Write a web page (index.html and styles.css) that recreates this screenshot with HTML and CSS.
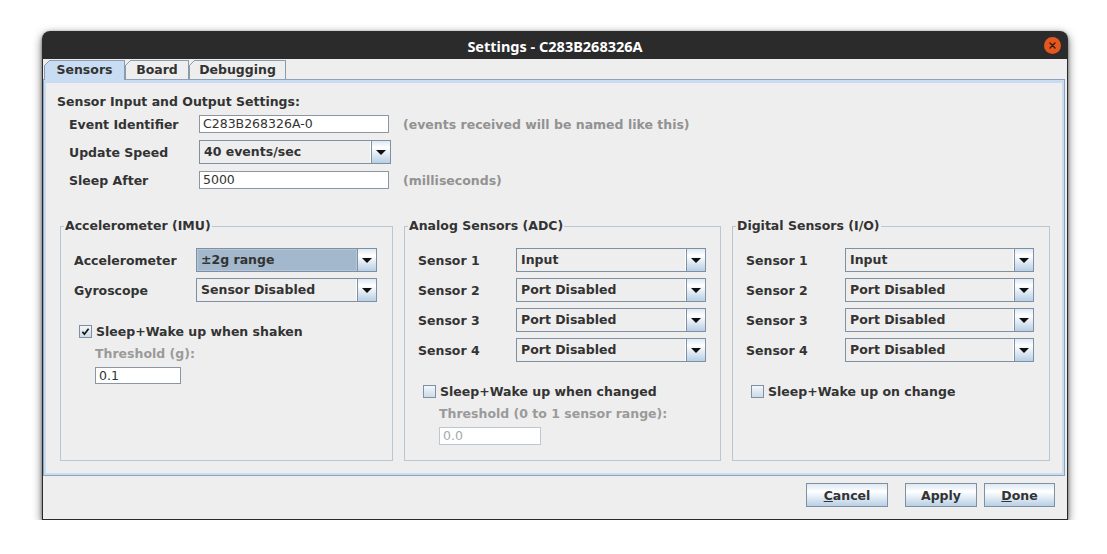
FILE: index.html
```html
<!DOCTYPE html>
<html>
<head>
<meta charset="utf-8">
<title>Settings</title>
<link rel="stylesheet" href="styles.css">
</head>
<body>
<div class="window">
  <div class="titlebar">
    <span></span>
    <span class="title">Settings - C283B268326A</span>
    <span class="close">
      <svg width="17" height="17" viewBox="0 0 17 17"><circle cx="8.5" cy="8.5" r="8.5" fill="#e4571f"/><path d="M6 6 L11 11 M11 6 L6 11" stroke="#3a1a0c" stroke-width="1.4" stroke-linecap="round"/></svg>
    </span>
  </div>
  <div class="frame">
    <div class="tabs">
      <div class="tab tab-sensors selected">Sensors</div>
      <div class="tab tab-board">Board</div>
      <div class="tab tab-debug">Debugging</div>
    </div>
    <div class="tab-content">
      <div class="tab-inner">
        <div class="heading">Sensor Input and Output Settings:</div>
        <div class="general">
          <div class="label">Event Identifier</div>
          <div class="field field-general">C283B268326A-0</div>
          <div class="hint">(events received will be named like this)</div>

          <div class="label">Update Speed</div>
          <div class="combo"><span class="combo-value">40 events/sec</span><span class="combo-arrow"></span></div>
          <div></div>

          <div class="label">Sleep After</div>
          <div class="field field-general">5000</div>
          <div class="hint">(milliseconds)</div>
        </div>

        <div class="panels">
          <fieldset class="panel">
            <legend>Accelerometer (IMU)</legend>
            <div class="panel-body">
              <div class="rows rows-imu">
                <div class="label">Accelerometer</div>
                <div class="combo combo-focused"><span class="combo-value">±2g range</span><span class="combo-arrow"></span></div>
                <div class="label">Gyroscope</div>
                <div class="combo"><span class="combo-value">Sensor Disabled</span><span class="combo-arrow"></span></div>
              </div>
              <div class="check-row check-row-imu">
                <span class="check"><svg width="11" height="11" viewBox="0 0 11 11"><path d="M2.4 5.8 L4.4 8.2 L8.6 2.8" fill="none" stroke="#111" stroke-width="1.7"/></svg></span>
                <span>Sleep+Wake up when shaken</span>
              </div>
              <div class="sub-label">Threshold (g):</div>
              <div class="field field-imu">0.1</div>
            </div>
          </fieldset>

          <fieldset class="panel">
            <legend>Analog Sensors (ADC)</legend>
            <div class="panel-body">
              <div class="rows rows-adc">
                <div class="label">Sensor 1</div>
                <div class="combo"><span class="combo-value">Input</span><span class="combo-arrow"></span></div>
                <div class="label">Sensor 2</div>
                <div class="combo"><span class="combo-value">Port Disabled</span><span class="combo-arrow"></span></div>
                <div class="label">Sensor 3</div>
                <div class="combo"><span class="combo-value">Port Disabled</span><span class="combo-arrow"></span></div>
                <div class="label">Sensor 4</div>
                <div class="combo"><span class="combo-value">Port Disabled</span><span class="combo-arrow"></span></div>
              </div>
              <div class="check-row">
                <span class="check"></span>
                <span>Sleep+Wake up when changed</span>
              </div>
              <div class="sub-label">Threshold (0 to 1 sensor range):</div>
              <div class="field field-adc disabled">0.0</div>
            </div>
          </fieldset>

          <fieldset class="panel">
            <legend>Digital Sensors (I/O)</legend>
            <div class="panel-body">
              <div class="rows rows-io">
                <div class="label">Sensor 1</div>
                <div class="combo"><span class="combo-value">Input</span><span class="combo-arrow"></span></div>
                <div class="label">Sensor 2</div>
                <div class="combo"><span class="combo-value">Port Disabled</span><span class="combo-arrow"></span></div>
                <div class="label">Sensor 3</div>
                <div class="combo"><span class="combo-value">Port Disabled</span><span class="combo-arrow"></span></div>
                <div class="label">Sensor 4</div>
                <div class="combo"><span class="combo-value">Port Disabled</span><span class="combo-arrow"></span></div>
              </div>
              <div class="check-row">
                <span class="check"></span>
                <span>Sleep+Wake up on change</span>
              </div>
            </div>
          </fieldset>
        </div>
      </div>
    </div>
    <div class="footer">
      <button class="btn btn-cancel"><u>C</u>ancel</button>
      <button class="btn btn-apply">Apply</button>
      <button class="btn btn-done"><u>D</u>one</button>
    </div>
  </div>
</div>
</body>
</html>
```
FILE: styles.css
```css
* { box-sizing: border-box; }

html, body {
  margin: 0;
  padding: 0;
  background: #ffffff;
}

body {
  font-family: "DejaVu Sans", "Liberation Sans", sans-serif;
  font-size: 12.5px;
  font-weight: bold;
  color: #333333;
}

.window {
  margin: 31px 0 0 42px;
  width: 1026px;
  height: 489px;
  display: flex;
  flex-direction: column;
  border-radius: 8px 8px 0 0;
  box-shadow: 0 3px 10px rgba(0, 0, 0, 0.6), 0 1px 3px rgba(0, 0, 0, 0.4);
}

.titlebar {
  height: 28px;
  flex: none;
  background: #2b2b2b;
  border-radius: 8px 8px 0 0;
  display: grid;
  grid-template-columns: 40px 1fr 40px;
  align-items: center;
}

.title {
  text-align: center;
  color: #ffffff;
  font-family: "Noto Sans", "DejaVu Sans", sans-serif;
  font-size: 14.5px;
  font-weight: bold;
  padding-top: 1px;
}

.close {
  justify-self: end;
  margin-right: 7px;
  width: 17px;
  height: 17px;
  display: flex;
}

.frame {
  flex: 1;
  display: flex;
  flex-direction: column;
  background: #eeeeee;
  border: 1px solid #2a2a2a;
  border-top: none;
  min-height: 0;
}

.tabs {
  display: flex;
  margin: 1px 0 0 1px;
  height: 19px;
  flex: none;
  position: relative;
  z-index: 1;
}

.tab {
  position: relative;
  height: 19px;
  border: 1px solid #8e9aa6;
  border-bottom: none;
  text-align: center;
  line-height: 17px;
  background: #eeeeee;
}

.tab::before {
  content: "";
  position: absolute;
  left: -1px;
  top: -1px;
  width: 7px;
  height: 7px;
  background: linear-gradient(135deg, #eeeeee 0 3.6px, #8e9aa6 3.6px 4.6px, transparent 4.6px);
}

.tab.selected {
  background: #c8ddf2;
  height: 20px;
  border-color: #8a9cb0;
}

.tab.selected::before {
  background: linear-gradient(135deg, #eeeeee 0 3.6px, #8a9cb0 3.6px 4.6px, transparent 4.6px);
}

.tab-sensors { width: 81px; }
.tab-board { width: 64px; }
.tab-debug { width: 97px; }

.tab-content {
  flex: 1;
  margin-right: 2px;
  border: 1px solid #8ea2b8;
  display: flex;
  min-height: 0;
}

.tab-inner {
  flex: 1;
  border: 2px solid #c8ddf2;
  border-top-width: 3px;
  display: flex;
  flex-direction: column;
  padding: 11px 0 0 11px;
}

.heading {
  line-height: 15px;
}

.general {
  margin: 6px 0 0 12px;
  display: grid;
  grid-template-columns: 130px 192px auto;
  grid-template-rows: 18px 24px 18px;
  row-gap: 7px;
  align-items: center;
}

.label {
  line-height: 15px;
  white-space: nowrap;
}

.hint {
  color: #929292;
  margin-left: 12px;
  line-height: 15px;
}

.field {
  height: 18px;
  border: 1px solid #8c96a0;
  background: #ffffff;
  font-weight: normal;
  padding-left: 3px;
  line-height: 16px;
  color: #333333;
  white-space: nowrap;
}

.field-general { width: 190px; }

.field.disabled {
  border-color: #bcc7d2;
  color: #a8a8a8;
}

.combo {
  height: 24px;
  border: 1px solid #7f90a2;
  display: flex;
  background: #eeeeee;
}

.combo-value {
  flex: 1;
  padding-left: 4px;
  line-height: 22px;
  white-space: nowrap;
  border-right: 1px solid #ffffff;
}

.combo-focused .combo-value {
  background: #a3b8cc;
  border: 1px solid #b4c6d8;
  padding-left: 3px;
  line-height: 20px;
}

.combo-arrow {
  width: 19px;
  flex: none;
  border-left: 1px solid #7f90a2;
  background: linear-gradient(#dde8f3 0%, #ffffff 30%, #b8cfe5 100%);
  display: flex;
  align-items: center;
  justify-content: center;
}

.combo-arrow::after {
  content: "";
  width: 0;
  height: 0;
  border-left: 5px solid transparent;
  border-right: 5px solid transparent;
  border-top: 5px solid #111111;
}

.panels {
  flex: 1;
  margin: 29px 0 12px 3px;
  display: grid;
  grid-template-columns: 333px 317px 318px;
  column-gap: 11px;
}

.panel {
  margin: 0;
  padding: 0;
  min-width: 0;
  border: 1px solid #b9c6d3;
}

.panel legend {
  margin-left: 3px;
  padding: 0 1px;
  line-height: 16px;
}

.panel-body {
  padding: 14px 14px 0 13px;
}

.rows {
  display: grid;
  grid-auto-rows: 24px;
  row-gap: 6px;
  align-items: center;
}

.rows-imu { grid-template-columns: 122px 181px; }
.rows-adc { grid-template-columns: 98px 190px; }
.rows-io { grid-template-columns: 99px 189px; }

.check-row {
  margin: 22px 0 0 5px;
  display: flex;
  align-items: center;
  gap: 4px;
  line-height: 15px;
}

.check-row-imu { margin-top: 22px; }

.check {
  width: 13px;
  height: 13px;
  flex: none;
  border: 1px solid #7f90a2;
  background: linear-gradient(#f3f7fb, #ccdae8);
  display: flex;
  align-items: center;
  justify-content: center;
}

.sub-label {
  margin: 7px 0 0 21px;
  color: #9a9a9a;
  line-height: 15px;
}

.sub-label + .field {
  margin: 6px 0 0 21px;
}

.field-imu { width: 86px; height: 17px; line-height: 15px; }
.field-adc { width: 102px; }

.footer {
  height: 43px;
  flex: none;
  display: flex;
  justify-content: flex-end;
  align-items: flex-start;
  padding: 7px 12px 0 0;
}

.btn {
  height: 24px;
  border: 1px solid #7f90a2;
  background: linear-gradient(#dde8f3 0%, #ffffff 35%, #b8cfe5 100%);
  font-family: inherit;
  font-size: inherit;
  font-weight: bold;
  color: #333333;
  padding: 0;
  margin: 0;
}

.btn-cancel { width: 82px; margin-right: 17px; }
.btn-apply { width: 72px; margin-right: 7px; }
.btn-done { width: 71px; }
```
